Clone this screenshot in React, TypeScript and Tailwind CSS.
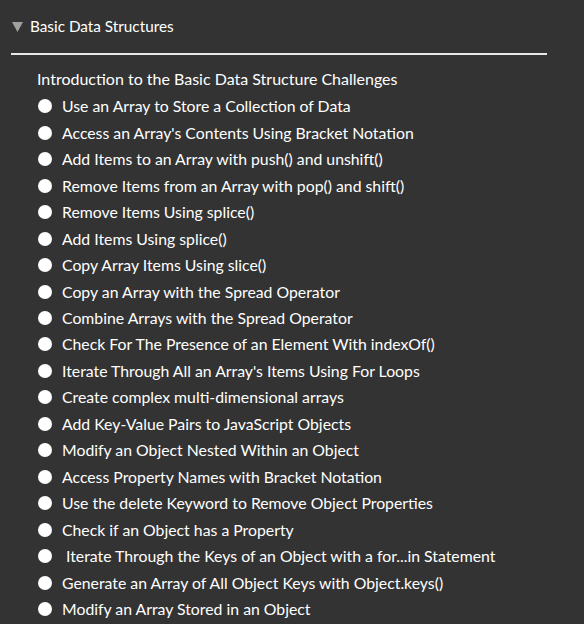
import React from "react";

const items = [
  "Use an Array to Store a Collection of Data",
  "Access an Array's Contents Using Bracket Notation",
  "Add Items to an Array with push() and unshift()",
  "Remove Items from an Array with pop() and shift()",
  "Remove Items Using splice()",
  "Add Items Using splice()",
  "Copy Array Items Using slice()",
  "Copy an Array with the Spread Operator",
  "Combine Arrays with the Spread Operator",
  "Check For The Presence of an Element With indexOf()",
  "Iterate Through All an Array's Items Using For Loops",
  "Create complex multi-dimensional arrays",
  "Add Key-Value Pairs to JavaScript Objects",
  "Modify an Object Nested Within an Object",
  "Access Property Names with Bracket Notation",
  "Use the delete Keyword to Remove Object Properties",
  "Check if an Object has a Property",
  "\u00a0Iterate Through the Keys of an Object with a for...in Statement",
  "Generate an Array of All Object Keys with Object.keys()",
  "Modify an Array Stored in an Object",
];

export default function App() {
  return (
    <div
      className="w-[584px] h-[624px] overflow-hidden bg-[#333333] text-white"
      style={{ fontFamily: "Lato, 'Open Sans', sans-serif" }}
    >
      <div className="flex items-center pl-[12px] pt-[17px] h-[19px] box-content">
        <svg width="11" height="10" viewBox="0 0 11 10" className="mr-[7px]">
          <polygon points="0,0 11,0 5.5,10" fill="#a0a0a0" />
        </svg>
        <span className="text-[15.3px] leading-[19px]">Basic Data Structures</span>
      </div>
      <div className="ml-[11px] w-[536px] h-[2px] bg-[#e6e6e6] mt-[17px]" />
      <div className="pl-[37px] pt-[11px]">
        <div className="text-[16px] leading-[26px]">
          Introduction to the Basic Data Structure Challenges
        </div>
        <ul className="mt-[1px]">
          {items.map((t) => (
            <li key={t} className="flex items-center h-[26.47px]">
              <span className="w-[14px] h-[14px] rounded-full bg-white mr-[10px] ml-[1px] shrink-0" />
              <span className="text-[15.8px] leading-[26px] whitespace-nowrap">{t}</span>
            </li>
          ))}
        </ul>
      </div>
    </div>
  );
}
